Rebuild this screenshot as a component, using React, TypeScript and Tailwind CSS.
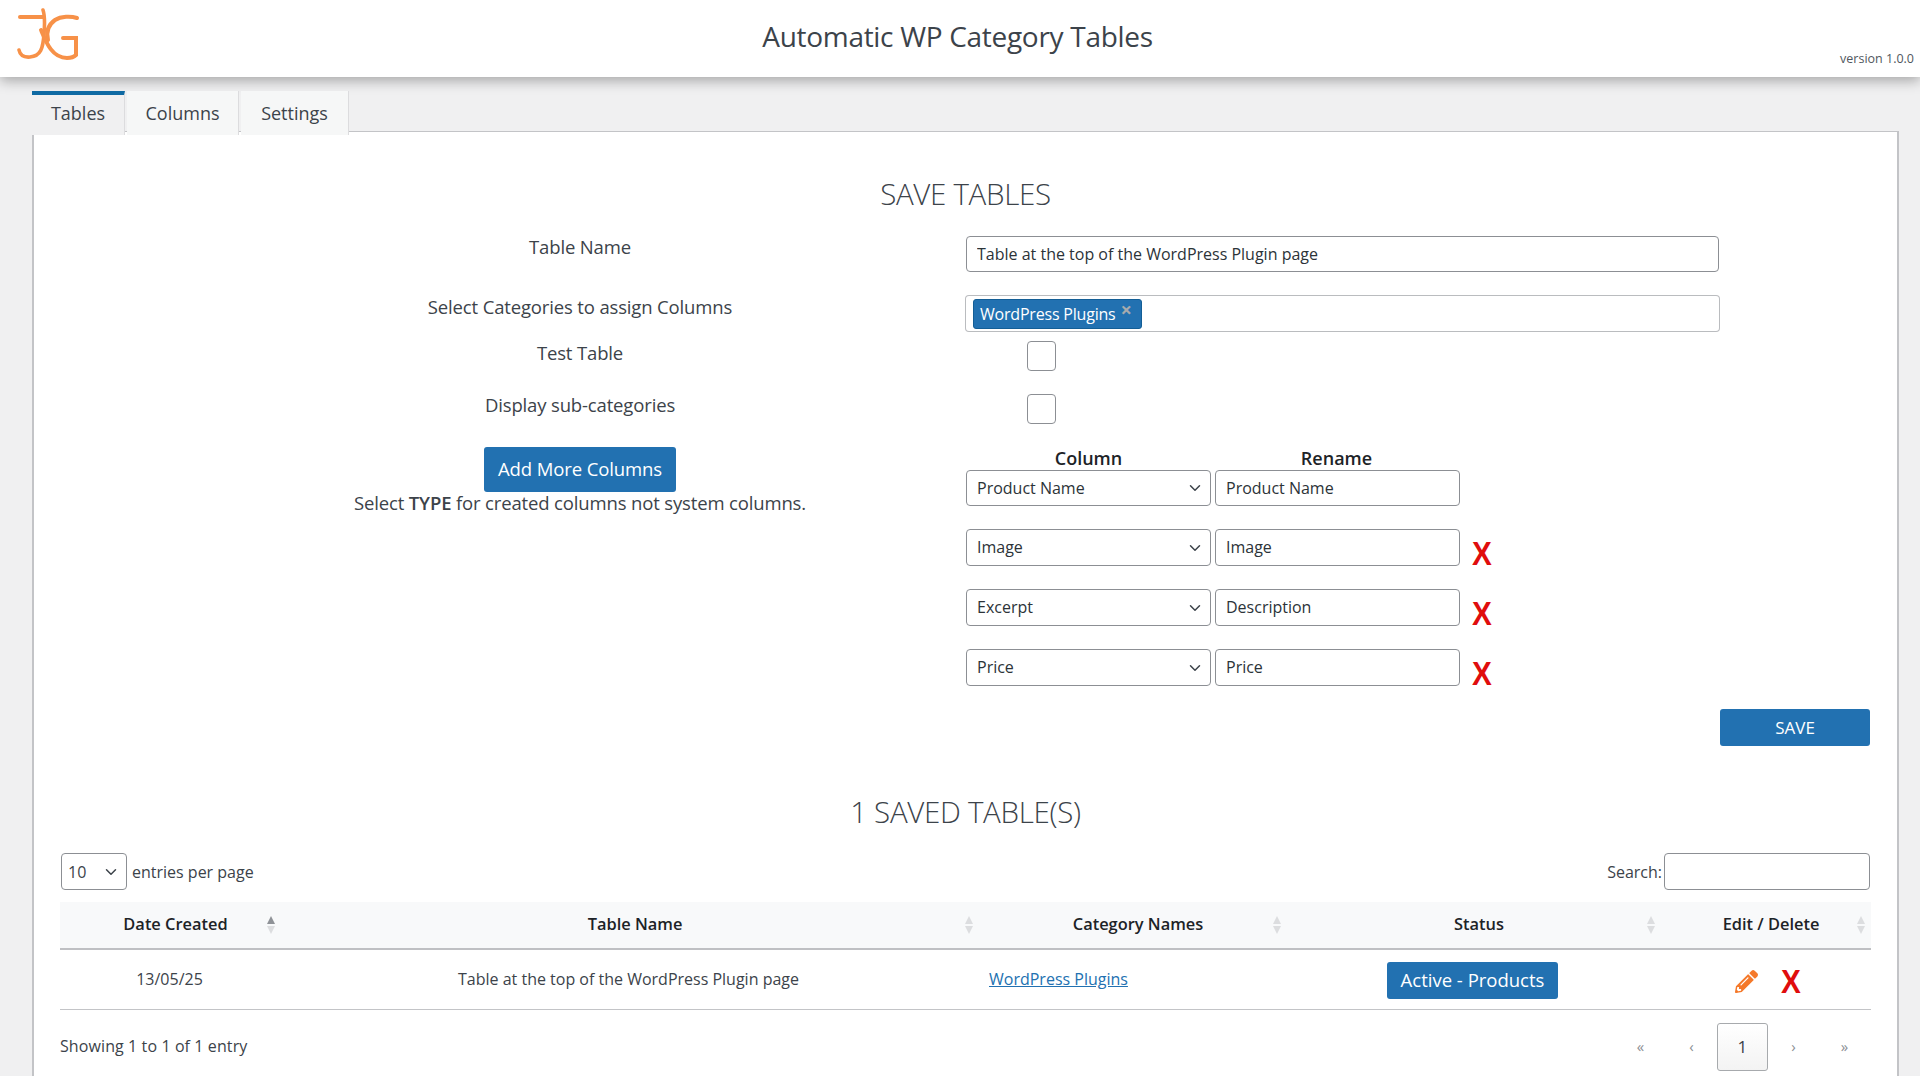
import { ChevronDown } from "lucide-react";
import { FaPencilAlt } from "react-icons/fa";

const font = "font-['Open_Sans','Noto_Sans',sans-serif]";

const Logo = () => (
  <svg width="64" height="54" viewBox="0 0 64 54" fill="none" stroke="#f79148" strokeWidth="4" strokeLinecap="round">
    <path d="M3 9 H26" />
    <path d="M26 2 C28 8 28 14 27 26 C26 40 24 48 13 49 C7 49.5 3 47 2 42" strokeWidth="3.6" />
    <path d="M60 10 C54 8 44 8 38 12 C31 17 29 24 31 32" />
    <path d="M24 22 C29 34 35 50 50 50 C54 50 57 49 59 47 V30 H46" />
  </svg>
);

const Chevron = () => (
  <ChevronDown className="absolute right-[7px] top-1/2 -translate-y-1/2 text-[#3c434a] pointer-events-none" size={18} strokeWidth={2} />
);

const SelectBox = ({ value, className }: { value: string; className: string }) => (
  <div className={"relative " + className}>
    <select
      defaultValue={value}
      className="w-full h-full appearance-none bg-white border border-[#8c8f94] rounded-[4px] pl-[10px] pb-px text-[#2c3338] text-[16px] outline-none"
    >
      <option>{value}</option>
    </select>
    <Chevron />
  </div>
);

const TextBox = ({ value, className }: { value?: string; className: string }) => (
  <input
    readOnly
    value={value ?? ""}
    className={"bg-white border border-[#8c8f94] rounded-[4px] pl-[10px] pb-px text-[#2c3338] text-[16px] outline-none " + className}
  />
);

const Check = () => <span className="block w-[29px] h-[30px] bg-white border border-[#8c8f94] rounded-[4px]" />;

const DeleteX = ({ className }: { className?: string }) => (
  <span className={"inline-block scale-x-[0.9] font-['Liberation_Sans'] font-bold text-[33px] leading-none text-[#e00d0d] " + (className ?? "")}>X</span>
);

const Sort = ({ active }: { active?: boolean }) => (
  <svg width="10" height="20" viewBox="0 0 10 20" className="absolute right-[5px] top-1/2 -translate-y-1/2">
    <path d="M5 1 L9 9 H1 Z" fill={active ? "#8f9297" : "#dcdddf"} />
    <path d="M5 19 L9 11 H1 Z" fill="#dcdddf" />
  </svg>
);

const Th = ({ label, active, className }: { label: string; active?: boolean; className: string }) => (
  <th className={"relative h-[47px] font-semibold text-[16.4px] text-[#1d2327] text-center pl-[10px] pr-0 pb-[2px] " + className}>
    {label}
    <Sort active={active} />
  </th>
);

const columnRows = [
  { column: "Image", rename: "Image" },
  { column: "Excerpt", rename: "Description" },
  { column: "Price", rename: "Price" },
];

const labelText = "text-center text-[18.5px] leading-[24px] tracking-[-0.15px]";

export default function App() {
  return (
    <div className={"h-[1076px] overflow-hidden bg-[#f0f0f1] text-[#3c434a] " + font}>
      {/* HEADER */}
      <header className="relative z-10 h-[77px] bg-white grid grid-cols-[1fr_auto_1fr] shadow-[0_4px_12px_rgba(0,0,0,0.3)]">
        <div className="pl-[17px] pt-[8px]">
          <Logo />
        </div>
        <h1 className="text-[28px] leading-[72px] text-[#3c434a] tracking-[-0.3px] -ml-[5px]">Automatic WP Category Tables</h1>
        <div className="self-end justify-self-end pr-[6px] pb-[9px] text-[12.5px] leading-[18px] text-[#50575e]">version 1.0.0</div>
      </header>

      <div className="pl-[32px] pr-[21px] pt-[14px]">
        {/* TABS */}
        <div className="relative z-10 flex gap-[2px] -mb-[4px]">
          <div className="w-[93px] h-[44px] border-t-[4px] border-[#0f6aa3] bg-[#f0f0f1] flex items-center justify-center pb-[4px] text-[18px] border-r border-r-[#dcdcde]">Tables</div>
          <div className="w-[112px] h-[44px] bg-[#f6f7f7] flex items-center justify-center text-[18px] border-r border-r-[#dcdcde]">Columns</div>
          <div className="w-[108px] h-[44px] bg-[#f6f7f7] flex items-center justify-center text-[18px] border-r border-r-[#dcdcde]">Settings</div>
        </div>

        {/* PANEL */}
        <div className="bg-white border border-[#c3c4c7] border-b-0 border-x-2 pt-[42px] px-[27px] h-[960px]">
          <h2 className="text-[29.5px] leading-[40px] font-light text-center text-[#3c434a] tracking-[-0.3px]">SAVE TABLES</h2>

          <div className="flex items-start mt-[22px]">
            <label className={"ml-[133px] w-[772px] -mt-px " + labelText}>Table Name</label>
            <TextBox value="Table at the top of the WordPress Plugin page" className="w-[753px] h-[36px]" />
          </div>

          <div className="flex items-start mt-[23px]">
            <label className={"ml-[133px] w-[772px] " + labelText}>Select Categories to assign Columns</label>
            <div className="w-[755px] h-[37px] -ml-px bg-white border border-[#8c8f94]/60 rounded-[4px] flex items-center pl-[7px]">
              <span className="h-[30px] w-[169px] flex items-start bg-[#2271b1] border border-[#135e96] rounded-[3px] text-white text-[16px] leading-[28px] pl-[6px] tracking-[-0.2px] whitespace-nowrap">
                WordPress Plugins
                <span className="ml-[5px] text-[#a7aaad] font-bold text-[20px] leading-[20px]">×</span>
              </span>
            </div>
          </div>

          <div className="flex items-start mt-[9px]">
            <label className={"ml-[133px] w-[772px] " + labelText}>Test Table</label>
            <div className="ml-[61px]"><Check /></div>
          </div>

          <div className="flex items-start mt-[23px]">
            <label className={"ml-[133px] w-[772px] -mt-px " + labelText}>Display sub-categories</label>
            <div className="ml-[61px]"><Check /></div>
          </div>

          {/* COLUMNS */}
          <div className="flex items-start mt-[22px]">
            <div className="ml-[133px] w-[772px] flex flex-col items-center">
              <button className="w-[192px] h-[45px] mt-px pb-[2px] bg-[#2271b1] rounded-[3px] text-white text-[18.5px] tracking-[-0.1px]">Add More Columns</button>
              <p className={"-mt-px " + labelText}>
                Select <b className="font-semibold">TYPE</b> for created columns not system columns.
              </p>
            </div>
            <div>
              <div className="flex gap-[3px] h-[24px] text-center text-[18px] leading-[24px] font-semibold text-[#1d2327]">
                <div className="w-[245px]">Column</div>
                <div className="w-[245px]">Rename</div>
              </div>
              <div className="flex gap-[4px] h-[36px] mb-[23px]">
                <SelectBox value="Product Name" className="w-[245px]" />
                <TextBox value="Product Name" className="w-[245px]" />
              </div>
              {columnRows.map((row) => (
                <div key={row.column} className="flex gap-[4px] h-[37px] mb-[23px]">
                  <SelectBox value={row.column} className="w-[245px]" />
                  <TextBox value={row.rename} className="w-[245px]" />
                  <DeleteX className="ml-[7px] mt-[8px]" />
                </div>
              ))}
            </div>
          </div>

          <div className="flex justify-end">
            <button className="w-[150px] h-[37px] bg-[#2271b1] rounded-[3px] text-white text-[17px]">SAVE</button>
          </div>

          <h2 className="mt-[46px] text-[29.5px] leading-[40px] font-light text-center text-[#3c434a] tracking-[-0.3px]">1 SAVED TABLE(S)</h2>

          {/* TABLE CONTROLS */}
          <div className="mt-[21px] flex items-center justify-between h-[37px] text-[16px]">
            <div className="flex items-center gap-[5px]">
              <div className="relative w-[66px] h-[37px]">
                <select defaultValue="10" className="w-full h-full appearance-none bg-white border border-[#8c8f94] rounded-[4px] pl-[6px] text-[16px] text-[#3c434a]">
                  <option>10</option>
                </select>
                <Chevron />
              </div>
              entries per page
            </div>
            <div className="flex items-center gap-[2px]">
              Search:
              <TextBox className="w-[206px] h-[37px]" />
            </div>
          </div>

          <table className="mt-[12px] -ml-px w-[1811px] table-fixed border-collapse">
            <thead>
              <tr className="bg-[#f8f9fa] border-b-2 border-[#bfc0c3]">
                <Th label="Date Created" active className="w-[221px]" />
                <Th label="Table Name" className="w-[698px]" />
                <Th label="Category Names" className="w-[308px]" />
                <Th label="Status" className="w-[374px]" />
                <Th label="Edit / Delete" className="w-[210px]" />
              </tr>
            </thead>
            <tbody>
              <tr className="h-[60px] border-b border-[#c3c4c7] text-[16px]">
                <td className="text-center pr-[2px]">13/05/25</td>
                <td className="text-center pr-[3px]">Table at the top of the WordPress Plugin page</td>
                <td className="pl-[10px]">
                  <a href="#" className="text-[#2271b1] underline">WordPress Plugins</a>
                </td>
                <td>
                  <div className="flex justify-center">
                    <button className="w-[171px] h-[37px] mt-[2px] -ml-[3px] bg-[#2271b1] rounded-[3px] text-white text-[18.5px]">Active - Products</button>
                  </div>
                </td>
                <td>
                  <div className="flex items-center justify-center gap-[22px] pt-[4px] pl-[5px]">
                    <FaPencilAlt size={23} className="text-[#f5792a]" />
                    <DeleteX />
                  </div>
                </td>
              </tr>
            </tbody>
          </table>

          {/* PAGER */}
          <div className="mt-[13px] -ml-px flex items-center justify-between text-[16px] tracking-[0.1px]">
            <span className="-mt-px">Showing 1 to 1 of 1 entry</span>
            <div className="flex items-center text-[#8c8f94] text-[15px]">
              <span className="w-[51px] text-center">«</span>
              <span className="w-[51px] text-center">‹</span>
              <span className="w-[51px] h-[48px] flex items-center justify-center rounded-[3px] border border-[#a7aaad] bg-gradient-to-b from-white to-[#f3f3f3] text-[#3c434a] text-[17px]">1</span>
              <span className="w-[51px] text-center">›</span>
              <span className="w-[51px] text-center">»</span>
            </div>
          </div>
        </div>
      </div>
    </div>
  );
}
